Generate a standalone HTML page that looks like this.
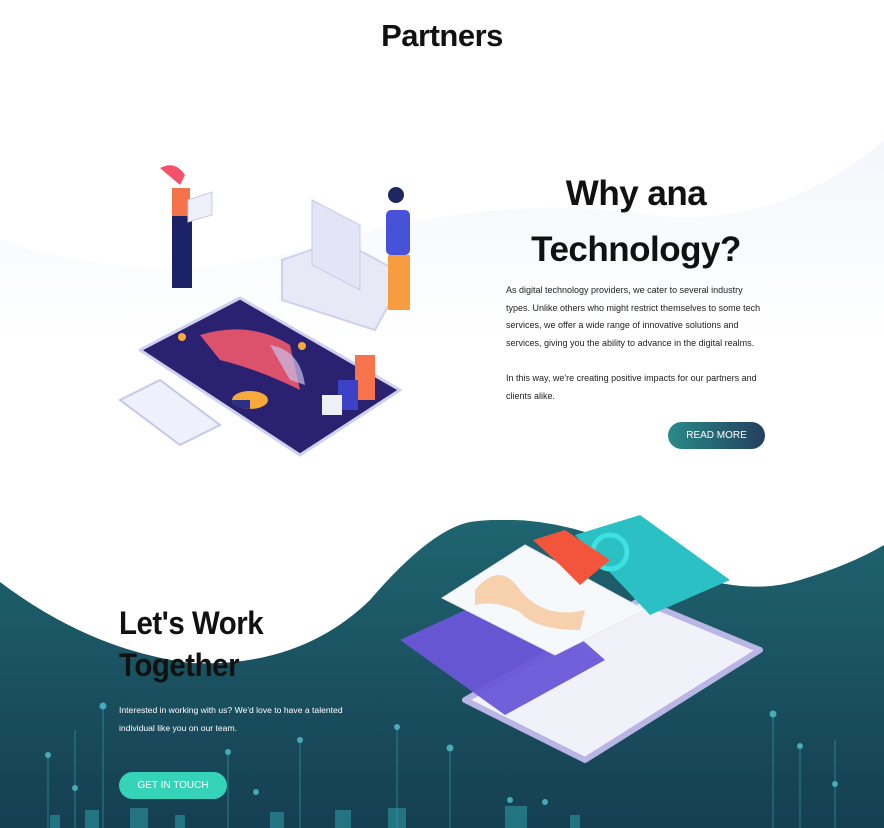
<!DOCTYPE html>
<html><head><meta charset="utf-8"><style>
*{margin:0;padding:0;box-sizing:border-box}
body{width:884px;height:828px;overflow:hidden;background:#fff;font-family:"Liberation Sans",sans-serif;position:relative;color:#111}
.abs{position:absolute}
h1{position:absolute;left:0;width:884px;top:18px;text-align:center;font-size:31px;font-weight:bold;letter-spacing:-0.5px}
.why{left:506px;width:260px;text-align:center;font-size:35px;font-weight:bold;line-height:56px;top:166px;letter-spacing:-0.5px}
.p{left:506px;width:262px;font-size:9px;line-height:17.5px;color:#222}
.btn1{left:668px;top:422px;width:97px;height:27px;border-radius:14px;background:linear-gradient(90deg,#2a8a88,#243f5e);color:#fff;font-size:10px;text-align:center;line-height:27px}
.lw{left:119px;top:602px;font-size:32px;font-weight:bold;line-height:42px;letter-spacing:-0.5px;transform:scaleX(0.92);transform-origin:left}
.p2{left:119px;top:701px;font-size:8.6px;line-height:18px;color:#fff;width:260px}
.btn2{left:119px;top:772px;width:108px;height:27px;border-radius:14px;background:#35d3b8;color:#fff;font-size:10px;text-align:center;line-height:27px}
</style></head><body>
<svg class="abs" style="left:0;top:0" width="884" height="828" viewBox="0 0 884 828">
<defs><linearGradient id="bg" x1="0" y1="0" x2="0" y2="1"><stop offset="0" stop-color="#1f6470"/><stop offset="1" stop-color="#153f52"/></linearGradient>
<linearGradient id="lw" x1="0" y1="0" x2="0" y2="1"><stop offset="0" stop-color="#f3f6fb"/><stop offset="1" stop-color="#ffffff"/></linearGradient></defs>
<path d="M0 240 Q150 290 300 250 Q500 190 650 215 Q780 230 884 140 L884 340 L0 340Z" fill="url(#lw)"/>
<path d="M0 520 L884 520 L884 828 L0 828Z" fill="url(#bg)"/>
<path d="M0 520 L0 582 Q90 650 190 663 Q300 668 370 600 Q430 530 470 522 Q560 510 650 560 Q740 600 800 580 Q850 565 884 545 L884 520Z" fill="#fff"/>
<g fill="#2a8a96" opacity="0.7">
<rect x="50" y="815" width="10" height="13"/><rect x="85" y="810" width="14" height="18"/><rect x="130" y="808" width="18" height="20"/><rect x="175" y="815" width="10" height="13"/><rect x="270" y="812" width="14" height="16"/><rect x="335" y="810" width="16" height="18"/><rect x="388" y="808" width="18" height="20"/><rect x="505" y="806" width="22" height="22"/><rect x="570" y="815" width="10" height="13"/>
</g>
<g stroke="#3aa6b0" stroke-width="1" opacity="0.6">
<line x1="48" y1="755" x2="48" y2="828"/><line x1="75" y1="730" x2="75" y2="828"/><line x1="103" y1="705" x2="103" y2="828"/><line x1="228" y1="750" x2="228" y2="828"/><line x1="300" y1="740" x2="300" y2="828"/><line x1="397" y1="725" x2="397" y2="828"/><line x1="450" y1="745" x2="450" y2="828"/><line x1="773" y1="712" x2="773" y2="828"/><line x1="800" y1="745" x2="800" y2="828"/><line x1="835" y1="740" x2="835" y2="828"/>
</g>
<g fill="#4fc3cc" opacity="0.8">
<circle cx="48" cy="755" r="3"/><circle cx="75" cy="788" r="3"/><circle cx="103" cy="706" r="3.5"/><circle cx="228" cy="752" r="3"/><circle cx="300" cy="740" r="3"/><circle cx="397" cy="727" r="3"/><circle cx="450" cy="748" r="3.5"/><circle cx="510" cy="800" r="3"/><circle cx="773" cy="714" r="3.5"/><circle cx="800" cy="746" r="3"/><circle cx="835" cy="784" r="3"/><circle cx="545" cy="802" r="3"/><circle cx="256" cy="792" r="3"/>
</g>
<!-- top illustration -->
<path d="M140 350 L240 298 L400 390 L300 455 Z" fill="#2a2270" stroke="#cfd0ee" stroke-width="3" stroke-linejoin="round"/>
<path d="M200 335 Q250 320 290 345 L300 390 Q260 370 220 360Z" fill="#f0566a" opacity="0.9"/>
<path d="M270 345 Q300 350 305 385 L290 380Z" fill="#c9c0e8" opacity="0.7"/>
<path d="M232 400 a18 9 0 1 0 36 0 a18 9 0 1 0 -36 0" fill="#f7a93a"/>
<path d="M232 400 a18 9 0 0 0 18 9 l0 -9z" fill="#2a2f8a"/>
<rect x="355" y="355" width="20" height="45" fill="#f6734c"/>
<rect x="338" y="380" width="20" height="30" fill="#3b42c8"/>
<rect x="322" y="395" width="20" height="20" fill="#eef0f8"/>
<path d="M120 400 L160 380 L220 425 L180 445 Z" fill="#eef0fb" stroke="#c6c8ea" stroke-width="2"/>
<path d="M282 260 L340 240 L405 275 L375 330 L282 300Z" fill="#e8e9f6" stroke="#cfd1ee" stroke-width="2"/>
<path d="M312 200 L360 225 L360 290 L312 265Z" fill="#e3e4f5" stroke="#c8cae8"/>
<rect x="386" y="210" width="24" height="45" rx="5" fill="#4652d8"/>
<rect x="388" y="255" width="22" height="55" fill="#f79c3f"/>
<circle cx="396" cy="195" r="8" fill="#1f2760"/>
<path d="M160 168 Q175 160 185 175 L180 185 Z" fill="#f4516a"/>
<rect x="172" y="188" width="18" height="28" fill="#f4734a"/>
<rect x="172" y="216" width="20" height="72" fill="#1c2266"/>
<path d="M188 200 L212 192 L212 215 L188 222Z" fill="#eeeff9" stroke="#c8cbe7"/>
<g fill="#f7a93a"><circle cx="182" cy="337" r="4"/><circle cx="302" cy="346" r="4"/></g>
<!-- bottom illustration -->
<path d="M465 700 L640 600 L760 650 L585 760 Z" fill="#f0f1f9" stroke="#b9b6e6" stroke-width="6" stroke-linejoin="round"/>
<path d="M400 640 L520 585 L605 660 L505 715 Z" fill="#6a56d8" opacity="0.95"/>
<path d="M575 535 L640 515 L730 580 L650 615 Z" fill="#2bc0c4"/>
<circle cx="610" cy="552" r="17" fill="none" stroke="#3fe0e0" stroke-width="5"/>
<path d="M442 598 L525 545 L645 610 L555 655 Z" fill="#f5f9fc" stroke="#e7eaf1"/>
<path d="M475 590 Q500 560 520 590 Q545 620 585 610 L580 630 Q535 630 520 612 Q495 600 475 605Z" fill="#f7c79a" opacity="0.8"/>
<path d="M533 540 L565 530 L610 560 L580 585 L560 565 Z" fill="#f2553b"/>
</svg>
<h1>Partners</h1>
<div class="abs why">Why ana Technology?</div>
<div class="abs p" style="top:282px">As digital technology providers, we cater to several industry<br>types. Unlike others who might restrict themselves to some tech<br>services, we offer a wide range of innovative solutions and<br>services, giving you the ability to advance in the digital realms.</div>
<div class="abs p" style="top:370px">In this way, we're creating positive impacts for our partners and<br>clients alike.</div>
<div class="abs btn1">READ MORE</div>
<div class="abs lw">Let's Work<br>Together</div>
<div class="abs p2">Interested in working with us? We'd love to have a talented<br>individual like you on our team.</div>
<div class="abs btn2">GET IN TOUCH</div>
</body></html>
